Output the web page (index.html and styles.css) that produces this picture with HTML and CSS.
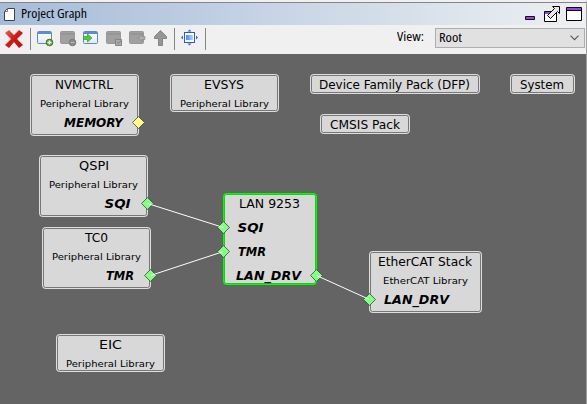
FILE: index.html
```
<!DOCTYPE html>
<html lang="en">
<head>
<meta charset="utf-8">
<title>Project Graph</title>
<link rel="stylesheet" href="styles.css">
</head>
<body>
<div class="window">
  <header class="titlebar">
    <svg class="doc-icon" width="11" height="13" viewBox="0 0 11 13"><path d="M3.5.5h7v12H.5v-9z" fill="#fff" stroke="#444"/><path d="M3.5.5v3h-3" fill="none" stroke="#777"/></svg>
    <svg class="title" width="72" height="20"><text x="0" y="14" textLength="66" lengthAdjust="spacingAndGlyphs">Project Graph</text></svg>
    <div class="window-buttons">
      <svg width="58" height="16" viewBox="0 0 58 16">
        <path d="M1.500 10.500h9v3h-9z" fill="#a43de8" stroke="#111"/>
        <path d="M20.500 5.500h12v10h-12z" fill="#fff" stroke="#000"/><path d="M21 6h8v2h-8z" fill="#a43de8"/>
        <path d="M28.500.5h7v7l-2-2-7 7-3-3 7-7z" fill="#e8e8e8" stroke="#000"/>
        <path d="M42.500 1.500h15v13h-15z" fill="#fff" stroke="#000"/><path d="M43 2h14v2h-14z" fill="#a43de8"/><path d="M43 4h14v1h-14z" fill="#000"/>
      </svg>
    </div>
  </header>
  <div class="toolbar">
    <svg class="tools" width="210" height="29" viewBox="0 25 210 29">
      <defs>
        <linearGradient id="red" x2="1" y2="1"><stop stop-color="#f06055"/><stop offset=".5" stop-color="#cf1717"/><stop offset="1" stop-color="#bc1212"/></linearGradient>
        <linearGradient id="paper" x2="0" y2="1"><stop stop-color="#fff"/><stop offset="1" stop-color="#dceaf8"/></linearGradient>
        <linearGradient id="screen" x2="1"><stop stop-color="#3f8cf2"/><stop offset="1" stop-color="#b5d9ff"/></linearGradient>
      </defs>
      <path d="M5 33l4-3 5 5 5-5 4 3-6 6 6 6-4 3-5-6-5 6-4-3 6-6z" fill="url(#red)"/>
      <path d="M30.500 28v22M174.500 28v22M205.500 28v22" stroke="#858585"/>
      <g><rect x="37.500" y="31.500" width="14" height="12" rx="1" fill="url(#paper)" stroke="#6687b4"/><path d="M38 32h13v2H38z" fill="#5b8bdd"/><circle cx="49.500" cy="42.500" r="3.300" fill="#63a33a" stroke="#397519"/><path d="M47.500 42.500h4M49.500 40.500v4" stroke="#fff" stroke-width="1.400"/></g>
      <g><rect x="60.500" y="31.500" width="14" height="12" rx="1" fill="#a0a0a0" stroke="#989898"/><path d="M61 34h13" stroke="#8c8c8c"/><circle cx="72.500" cy="42.500" r="3.300" fill="#8a8a8a" stroke="#7c7c7c"/><path d="M70.500 42.500h4" stroke="#bbb"/></g>
      <g><rect x="83.500" y="31.500" width="14" height="12" rx="1" fill="url(#paper)" stroke="#6687b4"/><path d="M84 32h13v2H84z" fill="#5b8bdd"/><path d="M83.500 36.500h4v-2.500l4.500 4-4.500 4v-2.500h-4z" fill="#54c737" stroke="#35a020" stroke-width=".7"/></g>
      <g><rect x="106.500" y="31.500" width="14" height="12" rx="1" fill="#a0a0a0" stroke="#989898"/><path d="M107 34h13" stroke="#8c8c8c"/><path d="M115.500 39.500h6v6h-6z" fill="#aaa" stroke="#848484"/><path d="M117 42l1.500 1.500 2.500-3" fill="none" stroke="#808080"/></g>
      <g><rect x="129.500" y="31.500" width="14" height="12" rx="1" fill="#a0a0a0" stroke="#989898"/><path d="M130 34h13" stroke="#8c8c8c"/><path d="M145 36.500h-3v-2l-4 3.500 4 3.500v-2h3z" fill="#adadad" stroke="#848484" stroke-width=".6"/></g>
      <path d="M160.500 30.500l6 6v2h-4v7h-4v-7h-4v-2z" fill="#969696" stroke="#858585"/>
      <g><rect x="184.500" y="32.500" width="10" height="10" fill="#fff" stroke="#3157c8"/><rect x="186" y="35" width="7" height="5" fill="url(#screen)"/><path d="M187.500 31.500h4l-2-2zM187.500 43.500h4l-2 2zM183 35.500v4l-2-2zM196 35.500v4l2-2z" fill="#3863d2"/></g>
    </svg>
    <div class="view">
      <svg class="label" width="30" height="20"><text x="0" y="13" textLength="27" lengthAdjust="spacingAndGlyphs">View:</text></svg>
      <div class="select">
        <svg width="26" height="16"><text x="0" y="12" textLength="23" lengthAdjust="spacingAndGlyphs">Root</text></svg>
        <svg width="9" height="6" viewBox="0 0 9 6"><path d="M.5.7l4 4 4-4" fill="none" stroke="#555" stroke-width="1.100"/></svg>
      </div>
    </div>
  </div>
  <svg class="graph" width="586" height="350" viewBox="0 54 586 350">
    <g class="node">
      <rect class="halo" x="30.500" y="74.500" width="108" height="61" rx="3"/><rect class="box" x="31.500" y="75.500" width="106" height="59" rx="2"/>
      <rect class="halo" x="170.500" y="74.500" width="108" height="37" rx="3"/><rect class="box" x="171.500" y="75.500" width="106" height="35" rx="2"/>
      <rect class="halo" x="310.500" y="74.500" width="169" height="19" rx="3"/><rect class="box" x="311.500" y="75.500" width="167" height="17" rx="2"/>
      <rect class="halo" x="510.500" y="74.500" width="64" height="19" rx="3"/><rect class="box" x="511.500" y="75.500" width="62" height="17" rx="2"/>
      <rect class="halo" x="320.500" y="114.500" width="89" height="19" rx="3"/><rect class="box" x="321.500" y="115.500" width="87" height="17" rx="2"/>
      <rect class="halo" x="39.500" y="155.500" width="108" height="61" rx="3"/><rect class="box" x="40.500" y="156.500" width="106" height="59" rx="2"/>
      <rect class="halo" x="42.500" y="227.500" width="108" height="61" rx="3"/><rect class="box" x="43.500" y="228.500" width="106" height="59" rx="2"/>
      <rect class="halo" x="369.500" y="251.500" width="112" height="61" rx="3"/><rect class="box" x="370.500" y="252.500" width="110" height="59" rx="2"/>
      <rect class="halo" x="56.500" y="334.500" width="108" height="37" rx="3"/><rect class="box" x="57.500" y="335.500" width="106" height="35" rx="2"/>
      <rect class="halo selected" x="223.500" y="193.500" width="93" height="91" rx="3"/><rect class="box selected" x="224.500" y="194.500" width="91" height="89" rx="2"/>
    </g>
    <g class="name">
      <text x="55" y="89" textLength="58" lengthAdjust="spacingAndGlyphs">NVMCTRL</text>
      <text x="204" y="89" textLength="40" lengthAdjust="spacingAndGlyphs">EVSYS</text>
      <text x="319" y="89" textLength="151" lengthAdjust="spacingAndGlyphs">Device Family Pack (DFP)</text>
      <text x="520" y="89" textLength="44" lengthAdjust="spacingAndGlyphs">System</text>
      <text x="330" y="129" textLength="70" lengthAdjust="spacingAndGlyphs">CMSIS Pack</text>
      <text x="79" y="170" textLength="30" lengthAdjust="spacingAndGlyphs">QSPI</text>
      <text x="85" y="242" textLength="23" lengthAdjust="spacingAndGlyphs">TC0</text>
      <text x="239" y="208" textLength="61" lengthAdjust="spacingAndGlyphs">LAN 9253</text>
      <text x="378" y="266" textLength="94" lengthAdjust="spacingAndGlyphs">EtherCAT Stack</text>
      <text x="99" y="349" textLength="23" lengthAdjust="spacingAndGlyphs">EIC</text>
    </g>
    <g class="kind">
      <text x="40" y="107" textLength="89" lengthAdjust="spacingAndGlyphs">Peripheral Library</text>
      <text x="180" y="107" textLength="89" lengthAdjust="spacingAndGlyphs">Peripheral Library</text>
      <text x="49" y="188" textLength="89" lengthAdjust="spacingAndGlyphs">Peripheral Library</text>
      <text x="52" y="260" textLength="89" lengthAdjust="spacingAndGlyphs">Peripheral Library</text>
      <text x="383" y="284" textLength="85" lengthAdjust="spacingAndGlyphs">EtherCAT Library</text>
      <text x="66" y="367" textLength="89" lengthAdjust="spacingAndGlyphs">Peripheral Library</text>
    </g>
    <g class="port-name">
      <text x="64" y="127" textLength="59" lengthAdjust="spacingAndGlyphs">MEMORY</text>
      <text x="104.500" y="208" textLength="26" lengthAdjust="spacingAndGlyphs">SQI</text>
      <text x="106" y="280" textLength="28" lengthAdjust="spacingAndGlyphs">TMR</text>
      <text x="237.500" y="232" textLength="26" lengthAdjust="spacingAndGlyphs">SQI</text>
      <text x="238" y="256" textLength="28" lengthAdjust="spacingAndGlyphs">TMR</text>
      <text x="236" y="280" textLength="65" lengthAdjust="spacingAndGlyphs">LAN_DRV</text>
      <text x="384" y="304" textLength="65" lengthAdjust="spacingAndGlyphs">LAN_DRV</text>
    </g>
    <g class="port">
      <path class="open" d="M132.500 122.500l6-6 6 6-6 6z"/>
      <path d="M141.500 203.500l6-6 6 6-6 6zM144.500 275.500l6-6 6 6-6 6zM217.500 227.500l6-6 6 6-6 6zM217.500 251.500l6-6 6 6-6 6zM310.500 275.500l6-6 6 6-6 6zM363.500 299.500l6-6 6 6-6 6z"/>
    </g>
    <path class="link" d="M147.500 203.500l76 24M150.500 275.500l73-24M316.500 275.500l53 24"/>
  </svg>
</div>
</body>
</html>
```
FILE: styles.css
```
* { box-sizing: border-box; }
body { margin: 0; overflow: hidden; background: #f0f0f0; font-family: "DejaVu Sans Condensed", "DejaVu Sans", sans-serif; font-stretch: condensed; }
svg { display: block; flex: none; }
.window { width: 587px; height: 404px; border-top: 2px solid #f0f0f0; border-right: 1px solid #a0a0a0; }
.titlebar { display: flex; align-items: center; height: 23px; border-top: 1px solid #858585; padding-left: 4px; background: linear-gradient(90deg, #a5bcd8, #edf0f2); }
.title { margin-left: 6px; overflow: visible; }
.title text, .view text { font-family: "Open Sans", sans-serif; font-size: 12px; }
.window-buttons { margin: 0 4px 0 auto; }
.toolbar { display: flex; align-items: center; justify-content: space-between; height: 29px; background: #f0f0f0; }
.view { display: flex; align-items: center; padding: 0 1px 3px 0; }
.label { margin-right: 8px; }
.select { display: flex; align-items: center; justify-content: space-between; width: 150px; height: 20px; padding: 0 5px 0 3px; border: 1px solid #adadad; background: #e1e1e1; }
.graph { background: #646464; }
.halo { fill: #dedede; stroke: #dedede; }
.box { fill: #d8d8d8; stroke: #777; }
.halo.selected { stroke: #0f0; fill: #0f0; }
.box.selected { stroke: #00e000; }
.name text { font-size: 13px; }
.kind text { font-family: "DejaVu Sans", sans-serif; font-size: 9.5px; font-stretch: normal; }
.port-name text { font-size: 12.5px; font-weight: bold; font-style: italic; }
.port { fill: #80ff80; stroke: #3a4a3a; stroke-width: .8; }
.port .open { fill: #fffa8c; }
.link { fill: none; stroke: #fff; }
```
